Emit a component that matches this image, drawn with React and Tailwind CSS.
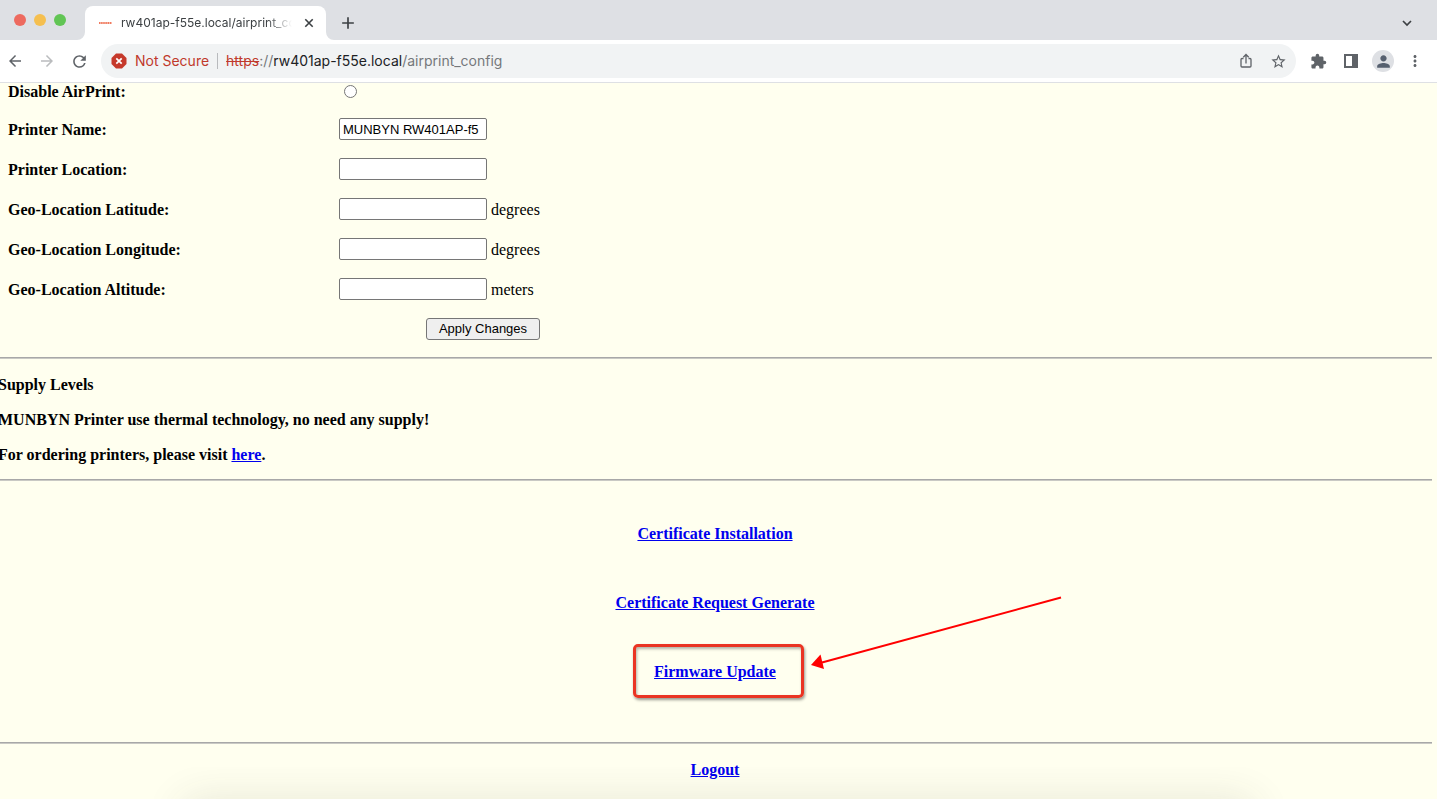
import React from "react";
import {
  MdAdd,
  MdArrowBack,
  MdArrowForward,
  MdExtension,
  MdMoreVert,
  MdPerson,
  MdRefresh,
  MdStarBorder,
} from "react-icons/md";

const link = "text-[#0000ee] underline";

function TabStrip() {
  return (
    <div className="flex h-10 items-end bg-[#dee0e4]">
      <div className="flex h-10 w-[77px] shrink-0 items-center gap-2 pl-[14px]">
        <button aria-label="Close window" className="size-3 rounded-full bg-[#ed6a5f]" />
        <button aria-label="Minimize window" className="size-3 rounded-full bg-[#f5bf4f]" />
        <button aria-label="Zoom window" className="size-3 rounded-full bg-[#61c554]" />
      </div>
      <svg className="size-2 shrink-0 text-white" viewBox="0 0 8 8" fill="currentColor" aria-hidden="true">
        <path d="M8 0v8H0a8 8 0 0 0 8-8z" />
      </svg>
      <div className="flex h-[34px] w-[241px] shrink-0 items-center rounded-t-lg bg-white pl-[13px] pr-[10px]">
        <svg className="h-4 w-[15px] shrink-0" viewBox="0 0 15 16" aria-hidden="true">
          <path d="M1 8h13" stroke="#f07a5e" strokeWidth="2" strokeDasharray="1.6 0.5" />
        </svg>
        <span className="ml-2 w-[172px] overflow-hidden whitespace-nowrap text-[12px] leading-4 text-[#3c4043] [mask-image:linear-gradient(to_right,black_85%,transparent)]">
          rw401ap-f55e.local/airprint_config
        </span>
        <button aria-label="Close tab" className="ml-[10px] shrink-0 text-[#3c4043]">
          <svg className="size-[14px]" viewBox="0 0 14 14" fill="none" stroke="currentColor" strokeWidth="1.6" aria-hidden="true">
            <path d="M3.300 3.300l7.400 7.400M10.700 3.300l-7.400 7.400" />
          </svg>
        </button>
      </div>
      <svg className="size-2 shrink-0 text-white" viewBox="0 0 8 8" fill="currentColor" aria-hidden="true">
        <path d="M0 0v8h8a8 8 0 0 1-8-8z" />
      </svg>
      <button aria-label="New tab" className="mb-[7px] ml-1 text-[#3c4043]">
        <MdAdd size={20} />
      </button>
      <button aria-label="Search tabs" className="mb-[11px] ml-auto mr-6 text-[#3c4043]">
        <svg className="size-3" viewBox="0 0 12 12" fill="none" stroke="currentColor" strokeWidth="1.7" aria-hidden="true">
          <path d="M2 4l4 4 4-4" />
        </svg>
      </button>
    </div>
  );
}

function Toolbar() {
  return (
    <div className="flex h-[43px] items-center border-b border-[#dee0e4] bg-white pr-[13px] pl-[6px] text-[#5f6368]">
      <button aria-label="Back">
        <MdArrowBack size={18} />
      </button>
      <button aria-label="Forward" className="ml-[14px] text-[#babcbe]">
        <MdArrowForward size={18} />
      </button>
      <button aria-label="Reload" className="ml-[14px]">
        <MdRefresh size={19} />
      </button>
      <div className="ml-3 flex h-[34px] flex-1 items-center rounded-full bg-[#f1f3f4] pr-[9px] pl-[10px] text-[14px] leading-5">
        <svg className="size-4" viewBox="0 0 16 16" aria-hidden="true">
          <path d="M5 .5h6L15.500 5v6L11 15.500H5L.5 11V5z" fill="#c5392b" />
          <path d="M5.300 5.300l5.400 5.400M10.700 5.300l-5.400 5.400" stroke="#fff" strokeWidth="1.700" />
        </svg>
        <span className="ml-2 text-[#c0392b]">Not Secure</span>
        <span className="mx-2 h-4 w-px bg-[#b8babd]" />
        <span className="flex-1 whitespace-nowrap text-[#75787b]">
          <span className="text-[#c0392b] line-through">https</span>
          ://<span className="text-[#202124]">rw401ap-f55e.local</span>/airprint_config
        </span>
        <button aria-label="Share">
          <svg className="size-4" viewBox="0 0 16 16" fill="none" stroke="currentColor" strokeWidth="1.300" aria-hidden="true">
            <path d="M5.500 5.500H4a1 1 0 0 0-1 1V13a1 1 0 0 0 1 1h8a1 1 0 0 0 1-1V6.500a1 1 0 0 0-1-1h-1.500M8 10.500V1.500M5.300 4.200L8 1.500l2.700 2.700" />
          </svg>
        </button>
        <button aria-label="Bookmark this tab" className="ml-4">
          <MdStarBorder size={17} />
        </button>
      </div>
      <button aria-label="Extensions" className="ml-[14px]">
        <MdExtension size={17} />
      </button>
      <button aria-label="Side panel" className="ml-4">
        <svg className="size-4" viewBox="0 0 16 16" aria-hidden="true">
          <path d="M1 1h14v14H1zM3 3v10h6V3z" fill="currentColor" fillRule="evenodd" />
        </svg>
      </button>
      <button aria-label="Profile" className="ml-[13px] flex size-[22px] items-center justify-center rounded-full bg-[#dee0e4] text-[#56606f]">
        <MdPerson size={19} />
      </button>
      <button aria-label="Menu" className="ml-3">
        <MdMoreVert size={18} />
      </button>
    </div>
  );
}

function Field({ id, label, value, unit }) {
  return (
    <div className="flex h-[22px] items-center">
      <label htmlFor={id} className="w-[331px] font-bold">
        {label}
      </label>
      <input
        id={id}
        type="text"
        defaultValue={value}
        className="h-[22px] w-[148px] rounded-[2px] border border-[#767676] bg-white px-[3px] font-['Liberation_Sans',sans-serif] text-[13px]"
      />
      {unit && <span className="ml-1">{unit}</span>}
    </div>
  );
}

function Rule() {
  return <hr className="h-[2px] border-0 border-t border-b border-t-[#a8a8a8] border-b-[#c9c9c4]" />;
}

export default function App() {
  return (
    <div className="relative flex min-h-screen flex-col overflow-hidden bg-[#ffffef] font-[Inter,sans-serif]">
      <TabStrip />
      <Toolbar />
      <main className="-ml-[2px] mr-[5px] flex-1 font-['Liberation_Serif',serif] text-[16px] leading-[19px] text-black">
        <form className="flex flex-col gap-[18px] pb-[17px] pl-[10px]" onSubmit={(e) => e.preventDefault()}>
          <div className="flex h-[17px] items-center">
            <label htmlFor="disable" className="w-[331px] font-bold">
              Disable AirPrint:
            </label>
            <input
              id="disable"
              type="radio"
              className="ml-[5px] size-[13px] appearance-none rounded-full border border-[#767676] bg-white checked:bg-[#0075ff]"
            />
          </div>
          <Field id="name" label="Printer Name:" value="MUNBYN RW401AP-f5" />
          <Field id="location" label="Printer Location:" />
          <Field id="lat" label="Geo-Location Latitude:" unit="degrees" />
          <Field id="lon" label="Geo-Location Longitude:" unit="degrees" />
          <Field id="alt" label="Geo-Location Altitude:" unit="meters" />
          <div className="flex w-[532px] justify-end">
            <button className="h-[22px] w-[114px] rounded-[3px] border border-[#767676] bg-[#efefef] font-['Liberation_Sans',sans-serif] text-[13px] leading-4">
              Apply Changes
            </button>
          </div>
        </form>
        <Rule />
        <section className="flex flex-col gap-4 pt-4 pb-[15px] font-bold">
          <h2>Supply Levels</h2>
          <p>MUNBYN Printer use thermal technology, no need any supply!</p>
          <p>
            For ordering printers, please visit <a href="#order" className={link}>here</a>.
          </p>
        </section>
        <Rule />
        <nav className="flex flex-col items-center gap-[50px] pt-[43px] pb-[61px] font-bold">
          <a href="#install" className={link}>Certificate Installation</a>
          <a href="#request" className={link}>Certificate Request Generate</a>
          <div className="relative">
            <a href="#firmware" className={link}>Firmware Update</a>
            <div className="pointer-events-none absolute -top-[18px] -right-7 -bottom-[17px] -left-[21px] rounded-[5px] border-3 border-[#ea3423] shadow-[1px_2px_3px_rgba(0,0,0,0.4),inset_1px_2px_3px_rgba(0,0,0,0.3)]" />
            <svg className="pointer-events-none absolute -top-[66px] left-full ml-[35px] h-[74px] w-[254px]" viewBox="0 0 254 74" aria-hidden="true">
              <path d="M11 66.500L250 1.500" stroke="#f00" strokeWidth="2" />
              <path d="M0 69l9.500-10.500L13 73z" fill="#f00" />
            </svg>
          </div>
        </nav>
        <Rule />
        <div className="pt-4 text-center font-bold">
          <a href="#logout" className={link}>Logout</a>
        </div>
      </main>
      <div className="pointer-events-none absolute inset-x-0 bottom-0 h-8 overflow-hidden" aria-hidden="true">
        <div className="absolute inset-x-[180px] top-full h-10 rounded-[20px] shadow-[0_0_40px_rgba(60,60,50,0.12)]" />
      </div>
    </div>
  );
}
